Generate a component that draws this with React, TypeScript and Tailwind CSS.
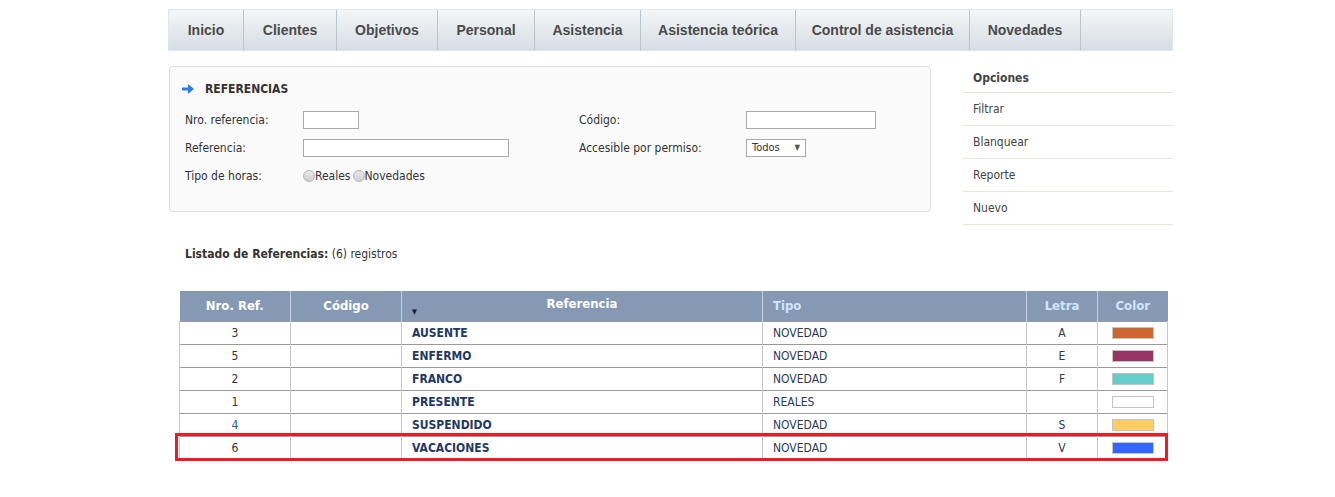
import React from 'react'

const tabs = [
  { label: 'Inicio', w: 'w-[75px]' },
  { label: 'Clientes', w: 'w-[93px]' },
  { label: 'Objetivos', w: 'w-[101px]' },
  { label: 'Personal', w: 'w-[97px]' },
  { label: 'Asistencia', w: 'w-[106px]' },
  { label: 'Asistencia teórica', w: 'w-[155px]' },
  { label: 'Control de asistencia', w: 'w-[174px]' },
  { label: 'Novedades', w: 'w-[111px]' },
]

const opciones = ['Filtrar', 'Blanquear', 'Reporte', 'Nuevo']

const rows = [
  { nro: '3', ref: 'AUSENTE', tipo: 'NOVEDAD', letra: 'A', color: 'bg-[#cc6633]' },
  { nro: '5', ref: 'ENFERMO', tipo: 'NOVEDAD', letra: 'E', color: 'bg-[#993366]' },
  { nro: '2', ref: 'FRANCO', tipo: 'NOVEDAD', letra: 'F', color: 'bg-[#66cccc]' },
  { nro: '1', ref: 'PRESENTE', tipo: 'REALES', letra: '', color: 'bg-white' },
  { nro: '4', ref: 'SUSPENDIDO', tipo: 'NOVEDAD', letra: 'S', color: 'bg-[#ffcc66]', link: true },
  { nro: '6', ref: 'VACACIONES', tipo: 'NOVEDAD', letra: 'V', color: 'bg-[#3366ff]', marked: true },
]

const body = "font-['DejaVu_Sans_Condensed','DejaVu_Sans',sans-serif]"

const App = () => {
  return (
    <div className={`min-h-[497px] w-[1335px] bg-white pt-[9px] text-[12px] text-[#333] ${body}`}>
      <div className="ml-[168px] w-[1005px]">
        {/* menu */}
        <nav className="flex h-[42px] border border-[#dbe6ee] bg-gradient-to-b from-[#f4f6f8] to-[#d6dde3] font-['Liberation_Sans',Arial,sans-serif] text-[14px] font-bold text-[#4a4a4a]">
          {tabs.map((t) => (
            <div key={t.label} className={`flex items-center justify-center border-r border-[#b9c4cd] ${t.w}`}>
              {t.label}
            </div>
          ))}
          <div className="flex-1" />
        </nav>

        <div className="mt-[15px] flex gap-[32px] pl-px">
          {/* filtro */}
          <section className="h-[146px] w-[762px] rounded-[4px] border border-[#dedede] bg-[#fafafa] px-[12px] pt-[13px]">
            <div className="flex items-center gap-[11px]">
              <svg width="12" height="10" viewBox="0 0 12 10">
                <path d="M0 3.5h6V0l6 5-6 5V6.5H0z" fill="#2f7de1" />
              </svg>
              <span className="font-bold text-[#333]">REFERENCIAS</span>
            </div>
            <div className="mt-[13px] grid grid-cols-[394px_1fr] pl-[3px]">
              <div className="flex flex-col gap-[10px]">
                <div className="flex h-[18px] items-center">
                  <span className="w-[118px]">Nro. referencia:</span>
                  <div className="h-[18px] w-[56px] border border-[#a9a9a9] bg-white" />
                </div>
                <div className="flex h-[18px] items-center">
                  <span className="w-[118px]">Referencia:</span>
                  <div className="h-[18px] w-[206px] border border-[#a9a9a9] bg-white" />
                </div>
                <div className="flex h-[18px] items-center">
                  <span className="w-[118px]">Tipo de horas:</span>
                  <span className="inline-block h-[12px] w-[12px] rounded-full border border-[#b5b5b5] bg-gradient-to-b from-[#e9e9e9] to-[#cfcfcf]" />
                  <span>Reales</span>
                  <span className="ml-[2px] inline-block h-[12px] w-[12px] rounded-full border border-[#b5b5b5] bg-gradient-to-b from-[#e9e9e9] to-[#cfcfcf]" />
                  <span>Novedades</span>
                </div>
              </div>
              <div className="flex flex-col gap-[10px]">
                <div className="flex h-[18px] items-center">
                  <span className="w-[167px]">Código:</span>
                  <div className="h-[18px] w-[130px] border border-[#a9a9a9] bg-white" />
                </div>
                <div className="flex h-[18px] items-center">
                  <span className="w-[167px]">Accesible por permiso:</span>
                  <div className="flex h-[18px] w-[60px] items-center justify-between border border-[#a9a9a9] bg-white pl-[5px] pr-[5px] text-[11px]">
                    <span>Todos</span>
                    <span className="text-[8px] text-[#555]">▼</span>
                  </div>
                </div>
              </div>
            </div>
          </section>

          {/* opciones */}
          <aside className="w-[210px]">
            <div className="flex h-[27px] items-center border-b border-[#e8e6d8] pb-[2px] pl-[10px] font-bold text-[#444]">Opciones</div>
            {opciones.map((o) => (
              <div key={o} className="flex h-[33px] items-center border-b border-[#e8e6d8] pl-[10px] text-[#444]">
                {o}
              </div>
            ))}
          </aside>
        </div>

        {/* listado */}
        <div className="mt-[20px] pl-[17px]">
          <span className="font-bold">Listado de Referencias:</span> (6) registros
        </div>

        <table className="ml-[11px] mt-[28px] w-[989px] border-collapse text-[12px]">
          <thead>
            <tr className="h-[30px] bg-[#8599b5] text-[13px] font-bold">
              <th className="w-[111px] border-r border-[#c6cfdb] text-white">Nro. Ref.</th>
              <th className="w-[111px] border-r border-[#c6cfdb] text-white">Código</th>
              <th className="relative w-[361px] border-r border-[#c6cfdb] pb-[4px] align-middle text-white">
                Referencia
                <span className="absolute bottom-[3px] left-[10px] text-[7px] text-[#1a1a1a]">▼</span>
              </th>
              <th className="w-[264px] border-r border-[#c6cfdb] pl-[10px] text-left text-[#d2e6ff]">Tipo</th>
              <th className="w-[71px] border-r border-[#c6cfdb] text-[#d2e6ff]">Letra</th>
              <th className="text-[#d2e6ff]">Color</th>
            </tr>
          </thead>
          <tbody>
            {rows.map((r) => (
              <tr key={r.nro} className="h-[23px] border-t border-[#9a9a9a] bg-white">
                <td className={`border-x border-[#c8c8c8] text-center ${r.link ? 'text-[#1d5a9e]' : 'text-[#333]'}`}>
                  <div className="relative">
                    {r.marked && (
                      <div className="absolute left-[-5px] top-[-6px] h-[28px] w-[993px] border-[3px] border-[#ed1c24]" />
                    )}
                    {r.nro}
                  </div>
                </td>
                <td className="border-r border-[#c8c8c8]" />
                <td className="border-r border-[#c8c8c8] pl-[10px] font-bold text-[#1f3864]">{r.ref}</td>
                <td className="border-r border-[#c8c8c8] pl-[10px] text-[#2b3a55]">{r.tipo}</td>
                <td className="border-r border-[#c8c8c8] text-center text-[#2b3a55]">{r.letra}</td>
                <td className="border-r border-[#c8c8c8]">
                  <div className={`mx-auto h-[12px] w-[42px] border border-[#c4c4c4] ${r.color}`} />
                </td>
              </tr>
            ))}
          </tbody>
        </table>
      </div>
    </div>
  )
}

export default App
